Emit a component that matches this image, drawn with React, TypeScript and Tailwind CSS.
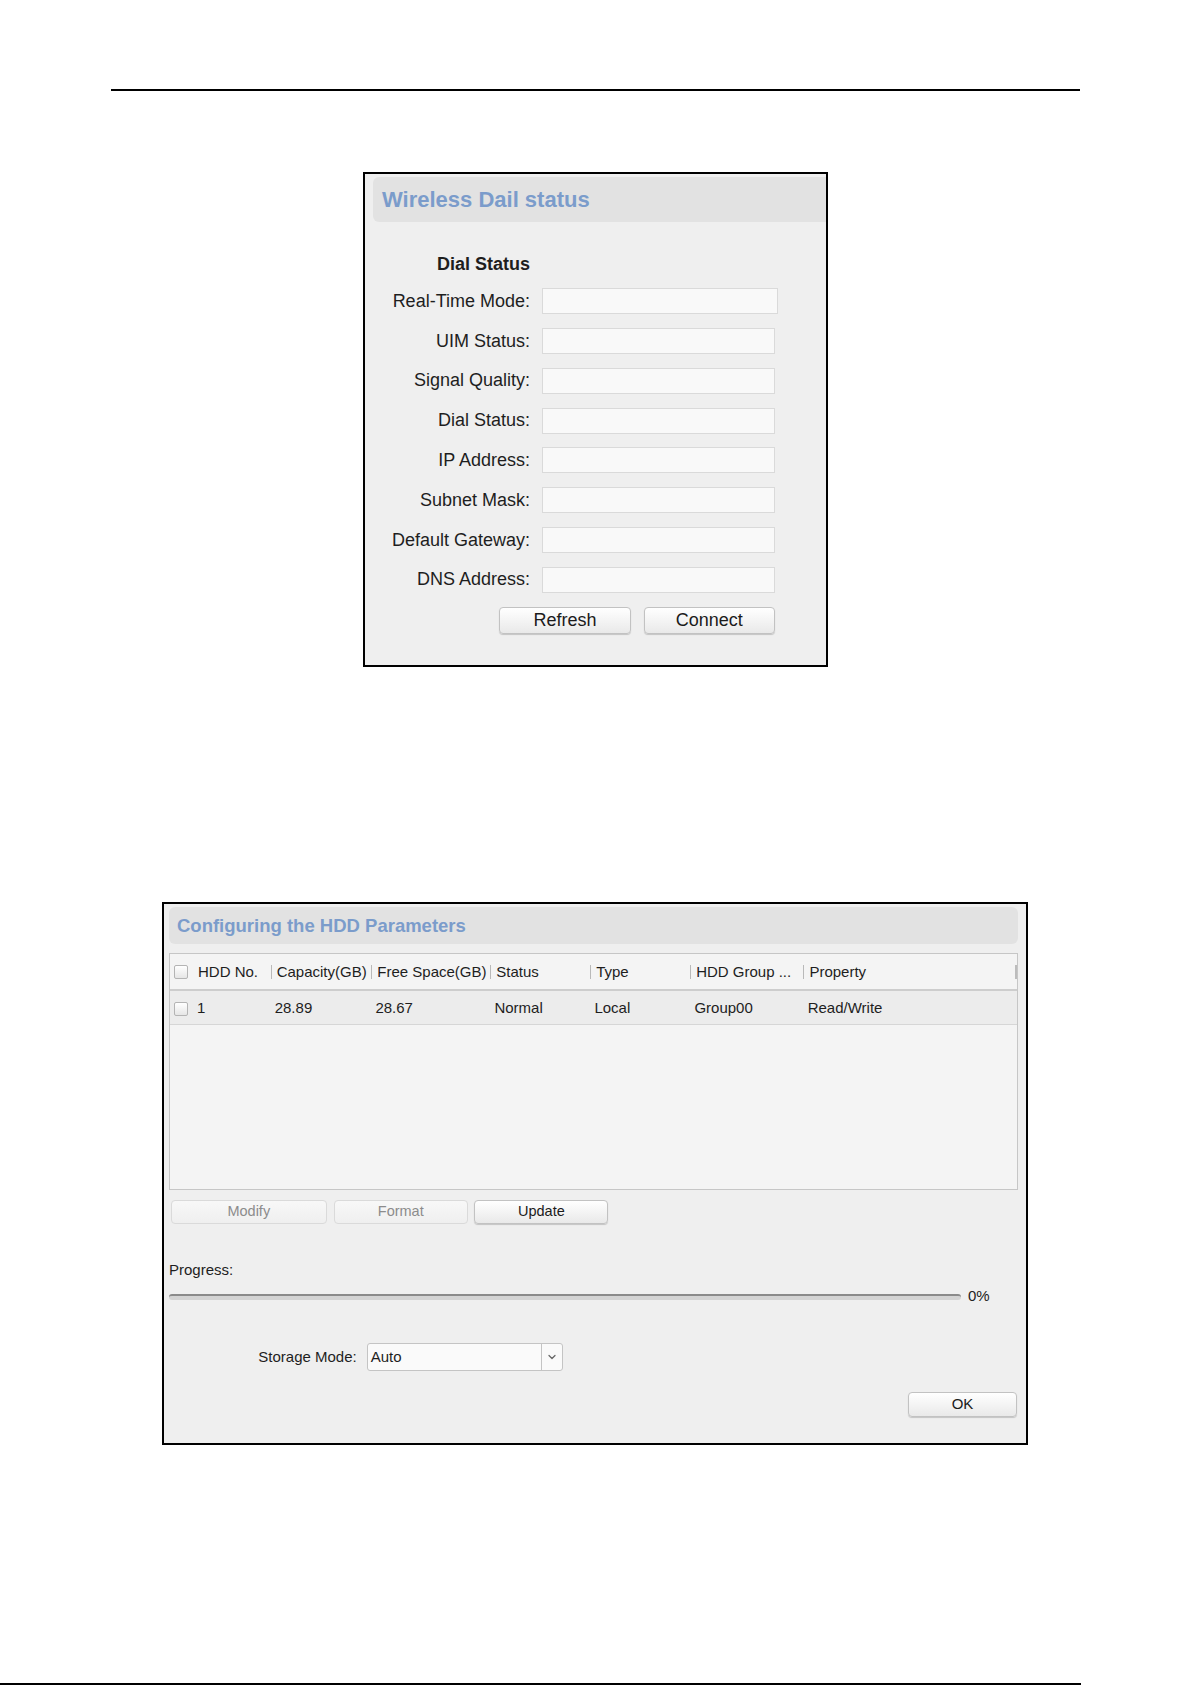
import { ChevronDown } from 'lucide-react';

const dialRows = [
  'Real-Time Mode:',
  'UIM Status:',
  'Signal Quality:',
  'Dial Status:',
  'IP Address:',
  'Subnet Mask:',
  'Default Gateway:',
  'DNS Address:',
];

const columns = [
  { label: 'Capacity(GB)', value: '28.89', width: 'w-[100.7px]' },
  { label: 'Free Space(GB)', value: '28.67', width: 'w-[119px]' },
  { label: 'Status', value: 'Normal', width: 'w-[100px]' },
  { label: 'Type', value: 'Local', width: 'w-[100px]' },
  { label: 'HDD Group ...', value: 'Group00', width: 'w-[113.3px]' },
  { label: 'Property', value: 'Read/Write', width: 'w-[211.7px]' },
];

function Checkbox() {
  return (
    <span className="block w-[14px] h-[14px] shrink-0 rounded-[2px] border border-[#b4b4b4] bg-linear-to-b from-white to-[#e6e6e6]" />
  );
}

function Button({ label, className, disabled }: { label: string; className: string; disabled?: boolean }) {
  return (
    <button
      className={`${className} rounded-[4px] border flex items-center justify-center ${
        disabled
          ? 'border-[#dadada] bg-linear-to-b from-[#f8f8f8] to-[#efefef] text-[#8c8c8c]'
          : 'border-[#c2c2c2] bg-linear-to-b from-white to-[#e9e9e9] text-[#1b1b1b] shadow-[0_1px_1px_rgba(0,0,0,0.18)]'
      }`}
    >
      {label}
    </button>
  );
}

function WirelessDialStatus() {
  return (
    <div className="mt-[81px] ml-[363px] w-[465px] h-[495px] border-2 border-black bg-[#efefef] pl-[8px] pt-[3px] flex flex-col">
      <div className="h-[45px] rounded-l-[6px] bg-[#e2e2e2] flex items-center pl-[9px] text-[22px] font-bold text-[#7b9ccb]">
        Wireless Dail status
      </div>

      <div className="mt-[31.5px] flex flex-col gap-[13.8px] text-[18px] leading-[21px] text-[#1e1e1e]">
        <div className="flex">
          <div className="w-[157px] text-right font-bold">Dial Status</div>
        </div>
        {dialRows.map((label, i) => (
          <div key={label} className="flex items-center h-[26px]">
            <div className="w-[157px] text-right whitespace-nowrap">{label}</div>
            <div
              className={`ml-[12px] h-[26px] ${
                i === 0 ? 'w-[236px]' : 'w-[233px]'
              } border border-[#dadada] bg-[#f9f9f9]`}
            />
          </div>
        ))}
        <div className="flex h-[27px]">
          <Button label="Refresh" className="ml-[126.3px] w-[131.4px] h-[27px]" />
          <Button label="Connect" className="ml-[13.3px] w-[130.7px] h-[27px]" />
        </div>
      </div>
    </div>
  );
}

function HddParameters() {
  return (
    <div className="mt-[235px] ml-[162px] w-[866px] h-[543px] border-2 border-black bg-[#efefef] pl-[5px] pr-[8px] pt-[3px] flex flex-col text-[15px] text-[#1e1e1e]">
      <div className="h-[37px] shrink-0 rounded-[6px] bg-[#e2e2e2] flex items-center pl-[8px] text-[18.5px] font-bold text-[#7b9ccb]">
        Configuring the HDD Parameters
      </div>

      <div className="mt-[8.5px] h-[237px] shrink-0 border border-[#c6c6c6] bg-[#f4f4f4] flex flex-col">
        <div className="h-[37px] border-b-2 border-[#cdcdcd] flex items-center pt-[2px]">
          <div className="w-[100.7px] flex items-center pl-[4px]">
            <Checkbox />
            <span className="ml-[10px]">HDD No.</span>
          </div>
          {columns.map((c) => (
            <div key={c.label} className={`${c.width} flex items-center whitespace-nowrap`}>
              <span className="w-px h-[14px] bg-[#b9b9b9]" />
              <span className="ml-[5px]">{c.label}</span>
            </div>
          ))}
          <span className="w-[2px] h-[14px] bg-[#bcbcbc]" />
        </div>

        <div className="h-[34px] bg-[#ececec] border-b border-[#d6d6d6] flex items-center pt-[3px]">
          <div className="w-[100.7px] flex items-center pl-[4px]">
            <Checkbox />
            <span className="ml-[9px]">1</span>
          </div>
          {columns.map((c) => (
            <div key={c.label} className={`${c.width} pl-[4px] whitespace-nowrap`}>
              {c.value}
            </div>
          ))}
        </div>

        <div className="flex-1" />
      </div>

      <div className="mt-[10.7px] h-[24.3px] shrink-0 flex gap-[6.5px] pl-[1.5px] text-[14.5px]">
        <Button label="Modify" className="w-[156.6px] h-[24.3px]" disabled />
        <Button label="Format" className="w-[134.3px] h-[24.3px]" disabled />
        <Button label="Update" className="w-[134px] h-[24.3px]" />
      </div>

      <div className="mt-[36.4px] leading-[18px]">Progress:</div>

      <div className="mt-[8.7px] h-[18px] flex items-center">
        <div className="w-[792px] h-[6px] rounded-full border-t-2 border-[#8a8a8a] bg-[#d3d3d3]" />
        <span className="ml-[7px] text-[#222]">0%</span>
      </div>

      <div className="mt-[37.3px] h-[28.3px] flex items-center">
        <div className="w-[187.7px] text-right">Storage Mode:</div>
        <div className="ml-[10px] w-[196.6px] h-full border border-[#c4c4c4] rounded-[3px] bg-[#fafafa] flex items-center">
          <span className="flex-1 pl-[3px]">Auto</span>
          <span className="w-[21.6px] h-full border-l border-[#c4c4c4] flex items-center justify-center">
            <ChevronDown size={12} strokeWidth={2.5} className="text-[#666]" />
          </span>
        </div>
      </div>

      <div className="mt-[20.7px] flex justify-end pr-[1px]">
        <Button label="OK" className="w-[109px] h-[25px]" />
      </div>
    </div>
  );
}

export default function App() {
  return (
    <div className="w-[1192px] h-[1685px] bg-white flex flex-col font-['Liberation_Sans',Arial,sans-serif]">
      <div className="mt-[89px] ml-[111px] w-[969px] h-[2px] shrink-0 bg-black" />
      <WirelessDialStatus />
      <HddParameters />
      <div className="mt-auto w-[1081px] h-[2px] shrink-0 bg-black" />
    </div>
  );
}
